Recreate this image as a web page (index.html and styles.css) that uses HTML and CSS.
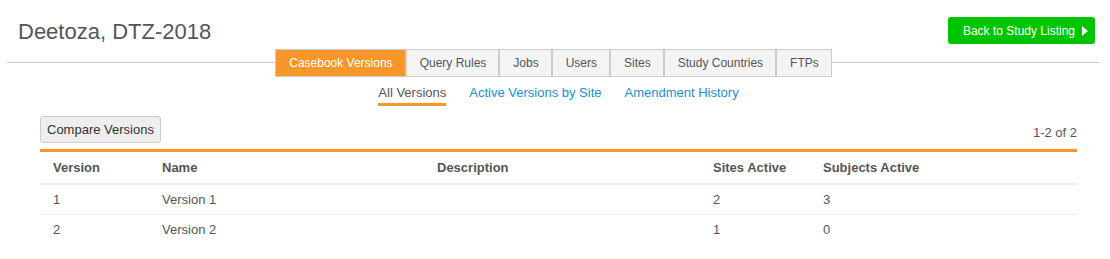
FILE: index.html
```html
<!DOCTYPE html>
<html lang="en">
<head>
  <meta charset="UTF-8">
  <title>Deetoza, DTZ-2018</title>
  <link rel="stylesheet" href="styles.css">
</head>
<body>
  <div class="topo">
    <h1 class="titulo">Deetoza, DTZ-2018</h1>
    <button class="voltar-btn" type="button">
      Back to Study Listing
      <svg class="seta" width="6" height="10" viewBox="0 0 6 10"><path d="M0 0 L6 5 L0 10 Z" fill="#fff"/></svg>
    </button>
  </div>

  <div class="abas-linha">
    <span class="linha"></span>
    <nav class="abas">
      <a class="aba ativa">Casebook Versions</a>
      <a class="aba">Query Rules</a>
      <a class="aba">Jobs</a>
      <a class="aba">Users</a>
      <a class="aba">Sites</a>
      <a class="aba">Study Countries</a>
      <a class="aba">FTPs</a>
    </nav>
    <span class="linha"></span>
  </div>

  <div class="sub-abas">
    <a class="sub-aba ativa">All Versions</a>
    <a class="sub-aba">Active Versions by Site</a>
    <a class="sub-aba">Amendment History</a>
  </div>

  <div class="conteudo">
    <div class="barra">
      <button class="comparar-btn" type="button">Compare Versions</button>
      <span class="contagem">1-2 of 2</span>
    </div>

    <table class="versoes">
      <colgroup>
        <col style="width:109px">
        <col style="width:275px">
        <col style="width:276px">
        <col style="width:110px">
        <col>
      </colgroup>
      <thead>
        <tr>
          <th>Version</th>
          <th>Name</th>
          <th>Description</th>
          <th>Sites Active</th>
          <th>Subjects Active</th>
        </tr>
      </thead>
      <tbody>
        <tr>
          <td>1</td>
          <td>Version 1</td>
          <td></td>
          <td>2</td>
          <td>3</td>
        </tr>
        <tr>
          <td>2</td>
          <td>Version 2</td>
          <td></td>
          <td>1</td>
          <td>0</td>
        </tr>
      </tbody>
    </table>
  </div>
</body>
</html>
```

FILE: styles.css
```css
body {
  margin: 0;
  font-family: "Liberation Sans", Arial, sans-serif;
  color: #555;
  background: #fff;
}
.topo {
  display: flex;
  justify-content: space-between;
  align-items: flex-start;
  padding: 17px 15px 0 18px;
  height: 28px;
}
.titulo {
  margin: 1px 0 0 0;
  font-size: 22px;
  line-height: 27px;
  font-weight: normal;
  color: #555;
}
.voltar-btn {
  display: flex;
  align-items: center;
  gap: 7px;
  height: 27px;
  padding: 0 7px 0 15px;
  background: #00c400;
  color: #fff;
  border: none;
  border-radius: 3px;
  font-family: inherit;
  font-size: 12px;
  cursor: pointer;
}
.abas-linha {
  display: flex;
  align-items: center;
  margin: 4px 10px 0 7px;
}
.linha {
  flex: 1;
  height: 1px;
  background: #ccc;
  margin-top: -1px;
}
.abas {
  display: flex;
}
.aba {
  display: block;
  height: 26px;
  line-height: 26px;
  padding: 0 12px 0 13px;
  font-size: 12px;
  color: #555;
  background: #f4f4f4;
  border: 1px solid #ccc;
  cursor: pointer;
}
.aba.ativa {
  background: #f7972b;
  color: #fff;
}
.sub-abas {
  display: flex;
  justify-content: center;
  gap: 23px;
  margin-top: 8px;
  padding-left: 7px;
}
.sub-aba {
  font-size: 13px;
  line-height: 16px;
  padding-bottom: 2px;
  border-bottom: 3px solid transparent;
  color: #1a8fd0;
  cursor: pointer;
}
.sub-aba.ativa {
  color: #555;
  border-bottom-color: #f7972b;
}
.conteudo {
  margin: 10px 33px 0 40px;
}
.barra {
  display: flex;
  justify-content: space-between;
  align-items: flex-end;
  padding-bottom: 6px;
  border-bottom: 3px solid #f7972b;
}
.comparar-btn {
  height: 27px;
  padding: 0 6px;
  background: #eee;
  border: 1px solid #ccc;
  border-radius: 3px;
  font-family: inherit;
  font-size: 13px;
  color: #333;
  cursor: pointer;
}
.contagem {
  font-size: 13px;
  line-height: 16px;
  padding-bottom: 2px;
  color: #555;
}
.versoes {
  width: 100%;
  table-layout: fixed;
  border-collapse: collapse;
  font-size: 13px;
}
.versoes th {
  height: 31px;
  padding: 0 13px;
  text-align: left;
  font-weight: bold;
  color: #555;
  border-bottom: 2px solid #eee;
}
.versoes td {
  height: 29px;
  padding: 0 13px;
  color: #555;
  border-bottom: 1px solid #eee;
}
.versoes tbody tr:last-child td {
  border-bottom: none;
}
```
